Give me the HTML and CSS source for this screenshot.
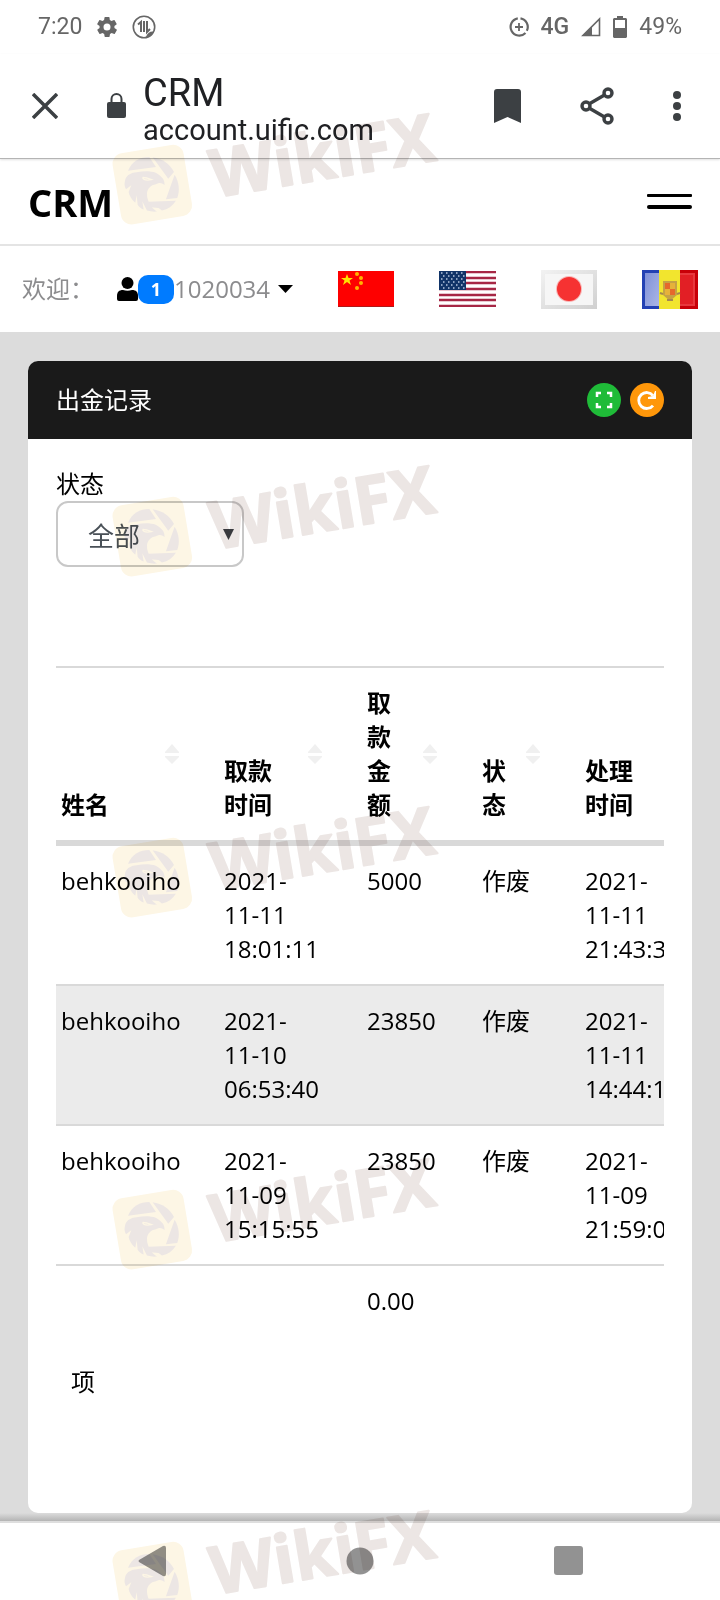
FILE: index.html
```html
<!DOCTYPE html>
<html lang="zh-CN">

<head>
    <meta charset="UTF-8">
    <meta name="viewport" content="width=device-width, initial-scale=1.0">
    <title>CRM</title>
    <link rel="stylesheet" href="styles.css">
</head>

<body>

    <!-- Shared shapes -->
    <svg class="defs" width="0" height="0" aria-hidden="true">
        <symbol id="sort" viewBox="0 0 14 20">
            <path fill="#f0f0f0" d="M0 9v-1L7 0l7 8v1zM0 12h14v1l-7 7-7-7z" />
        </symbol>
        <symbol id="wikifx" viewBox="330 320 1000 360">
            <rect x="349" y="445" width="216" height="216" rx="32" fill="#fdf6e5" transform="rotate(-9.5 457 553)" />
            <g fill="#ece6e4" transform="translate(324 417)">
                <path d="M60 94C72 66 96 53 124 53l20 30z" />
                <path d="M134 54c28 4 52 20 64 44l-17 20z" />
                <path d="M200 106c14 22 16 48 8 70l-34 4z" />
                <path d="M120 187l84-3c-10 16-24 26-42 30l-10-8-24-2z" />
                <path d="M52 120c6-14 18-20 34-21 14-3 30-4 44-2 10 0 20 6 28 14 8 6 12 14 12 26l-6-4c-8-4-14-2-20 2-16 2-26 14-27 28 0 22 12 42 30 54-10 1-20 0-30-3l-14-28 4 25c-8-4-14-9-18-15l-3-28-4 22c-10-8-18-20-20-32l8-20-16 12c-4-8-5-14-4-20z" />
                <path fill="none" stroke="#fdf6e5" stroke-width="4" d="M104 114c2 8 10 10 26 7l-14-5-12-2" />
            </g>
            <text class="wikifx-text" x="644" y="592" transform="rotate(-9.5 644 592)">WikiFX</text>
        </symbol>
    </svg>

    <!-- Phone status bar -->
    <div class="status-bar">
        <div class="status-left">
            <span>7:20</span>
            <svg width="20" height="20" viewBox="2 2 20 20">
                <path fill="#666" d="M19.4 13a7.500 7.500 0 0 0 0-2l2.100-1.600a.5.5 0 0 0 .1-.6l-2-3.500a.5.5 0 0 0-.6-.2l-2.500 1a7.300 7.300 0 0 0-1.700-1L14.500 2.400a.5.5 0 0 0-.5-.4h-4a.5.5 0 0 0-.5.4l-.4 2.700a7.700 7.700 0 0 0-1.700 1l-2.500-1a.5.5 0 0 0-.6.2l-2 3.500a.5.5 0 0 0 .1.6L4.600 11a7.500 7.500 0 0 0 0 2l-2.100 1.600a.5.5 0 0 0-.1.600l2 3.500c.1.200.4.300.6.200l2.500-1a7.300 7.300 0 0 0 1.700 1l.4 2.700c0 .2.200.4.500.4h4c.2 0 .5-.2.5-.4l.4-2.700a7.700 7.700 0 0 0 1.700-1l2.500 1c.2.100.5 0 .6-.2l2-3.500a.5.5 0 0 0-.1-.6zM12 15.500a3.500 3.500 0 1 1 0-7 3.500 3.500 0 0 1 0 7z" />
            </svg>
            <svg width="24" height="24" viewBox="0 0 24 24">
                <circle cx="12" cy="12" r="10.700" fill="none" stroke="#666" stroke-width="1.600" />
                <path fill="none" stroke="#666" stroke-width="2" d="M6 9.500L9 7v10M12 6v11M15 6v11l3-3" />
                <path fill="#666" d="M14 22c1-4 4-6 8-5.500-1 3-4 5.500-8 5.500z" />
            </svg>
        </div>
        <div class="status-right">
            <svg width="20" height="20" viewBox="0 0 20 20" fill="none" stroke="#666">
                <path stroke-width="2.200" d="M8.800 1.300A8.700 8.700 0 1 0 16.500 16M11.500 1.300a8.700 8.700 0 0 1 6.300 12.500" />
                <path stroke-width="1.800" d="M10 6v8M6 10h8" />
            </svg>
            <span class="network">4G</span>
            <svg width="20" height="20" viewBox="0 0 20 20">
                <path fill="none" stroke="#666" stroke-width="1.600" d="M2 18.500H18.500V2z" />
                <path fill="#666" d="M1 19L11 9v10z" />
            </svg>
            <svg width="14" height="24" viewBox="0 0 14 24">
                <path fill="#666" fill-rule="evenodd" d="M4 1h6v2h3l1 1v18l-1 1H1l-1-1V4l1-1h3zM2 5v8h10V5z" />
            </svg>
            <span>49%</span>
        </div>
    </div>

    <!-- Browser bar -->
    <div class="browser-bar">
        <button class="icon-button" aria-label="Close">
            <svg width="26" height="26" viewBox="0 0 26 26">
                <path stroke="#3c4043" stroke-width="3.500" d="M1 1l24 24M25 1L1 25" />
            </svg>
        </button>
        <svg class="lock" width="19" height="26" viewBox="0 0 19 26">
            <rect y="9" width="19" height="16" rx="2" fill="#3c4043" />
            <path fill="none" stroke="#3c4043" stroke-width="2" d="M4.500 10V6a5 5 0 0 1 10 0v4" />
        </svg>
        <div class="page-info">
            <span class="page-title">CRM</span>
            <span class="page-url">account.uific.com</span>
        </div>
        <div class="browser-actions">
            <button class="icon-button" aria-label="Bookmark">
                <svg width="27" height="34" viewBox="0 0 27 34">
                    <path fill="#3c4043" d="M3 0h21a3 3 0 0 1 3 3v31l-13.500-6L0 34V3a3 3 0 0 1 3-3z" />
                </svg>
            </button>
            <button class="icon-button" aria-label="Share">
                <svg width="34" height="38" viewBox="0 0 34 38" fill="none" stroke="#3c4043" stroke-width="3.400">
                    <circle cx="28" cy="6" r="4" />
                    <circle cx="6" cy="19" r="4" />
                    <circle cx="28" cy="32" r="4" />
                    <path d="M9 17l15.500-9M9 21l15.500 9" />
                </svg>
            </button>
            <button class="icon-button" aria-label="More">
                <svg width="8" height="32" viewBox="0 0 8 32" fill="#3c4043">
                    <circle cx="4" cy="5" r="4" />
                    <circle cx="4" cy="16" r="4" />
                    <circle cx="4" cy="27" r="4" />
                </svg>
            </button>
        </div>
    </div>

    <!-- Site header -->
    <header class="site-header">
        <a href="#" class="brand">CRM</a>
        <button class="icon-button" aria-label="Menu">
            <svg width="45" height="16" viewBox="0 0 45 16">
                <rect width="45" height="3" rx="1" />
                <rect y="11" width="45" height="4" rx="2" />
            </svg>
        </button>
    </header>

    <nav class="user-bar">
        <div class="welcome">
            <span>欢迎：</span>
            <a href="#" class="user-menu">
                <svg width="21" height="24" viewBox="0 0 21 24">
                    <circle cx="10.500" cy="6" r="6" />
                    <path d="M0 22v-3c0-4 2-6 6-6 3 1 6 1 9 0 4 0 6 2 6 6v3a2 2 0 0 1-2 2H2a2 2 0 0 1-2-2z" />
                </svg>
                <span class="badge">1</span>
                <span>1020034</span>
                <svg class="caret" width="15" height="8" viewBox="0 0 15 8">
                    <path d="M0 0h15L7.500 8z" />
                </svg>
            </a>
        </div>
        <a href="#" class="flag" aria-label="中文">
            <svg width="56" height="36" viewBox="0 0 56 36">
                <path fill="#fe0000" d="M0 0h56v36H0z" />
                <path fill="#b01818" d="M0 35h56v1H0z" />
                <path fill="#ffe400" d="M9 3l1.500 4H15l-3.500 2.500 1.500 4.500-4-3-4 3 1.500-4.500L3 7h4.500z" />
                <g fill="#ffb400">
                    <circle cx="19" cy="3" r="2" />
                    <circle cx="23" cy="7" r="2" />
                    <circle cx="23" cy="12" r="2" />
                    <circle cx="19" cy="17" r="2" />
                </g>
            </svg>
        </a>
        <a href="#" class="flag" aria-label="English">
            <svg width="57" height="36" viewBox="0 0 57 36">
                <path fill="#fff" d="M0 0h57v36H0z" />
                <path stroke="#a62745" stroke-width="2.700" d="M0 1h57M0 7h57M0 12h57M0 18h57M0 24h57M0 29h57M0 35h57" />
                <path fill="#113468" d="M0 0h27v19H0z" />
                <path stroke="#b8c8e0" stroke-width="1.500" stroke-dasharray="1.500 3.500" d="M2 2h25M4 5h23M2 8h25M4 11h23M2 14h25M4 17h23" />
            </svg>
        </a>
        <a href="#" class="flag" aria-label="日本語">
            <svg width="56" height="39" viewBox="0 0 56 39">
                <defs>
                    <linearGradient id="paper" x1="0" y1="0" x2="1" y2="1">
                        <stop offset="0" stop-color="#f2f2f2" />
                        <stop offset="1" stop-color="#d0d0d0" />
                    </linearGradient>
                </defs>
                <path fill="url(#paper)" d="M0 0h56v39H0z" />
                <path fill="#f6f6f6" d="M4 4h48v31H4z" />
                <circle cx="28" cy="19" r="13" fill="#f9b5b5" />
                <circle cx="28" cy="19" r="12" fill="#f63232" />
            </svg>
        </a>
        <a href="#" class="flag" aria-label="Andorra">
            <svg width="56" height="39" viewBox="0 0 56 39">
                <defs>
                    <linearGradient id="blue" x1="0" y1="0" x2="1" y2="1">
                        <stop offset="0" stop-color="#7f90d8" />
                        <stop offset="1" stop-color="#aab6e6" />
                    </linearGradient>
                </defs>
                <path fill="#2341b4" d="M0 0h18v39H0z" />
                <path fill="url(#blue)" d="M3 3h14v33H3z" />
                <path fill="#c80008" d="M38 0h18v39H38z" />
                <path fill="#e8383d" d="M38 3h15v33H38z" />
                <path fill="#e21f25" d="M38 5h13v29H38z" />
                <path fill="#f2e52e" d="M17 0h21v39H17z" />
                <path fill="#c5a245" d="M21 11h14v14l-7 6-7-6z" />
                <path fill="#e5692c" d="M23 13h5v6h-5zM28 19h5v6h-5z" />
                <path fill="#e6b23a" d="M28 13h5v6h-5zM23 19h5v6h-5z" />
                <path fill="none" stroke="#a58850" stroke-width="2" d="M18 23l3 1M35 24l3-1M25 30h6" />
            </svg>
        </a>
    </nav>

    <main class="content">
        <section class="card">
            <div class="card-header">
                <h1>出金记录</h1>
                <div class="card-tools">
                    <button class="tool tool-expand" aria-label="Fullscreen">
                        <svg width="18" height="18" viewBox="0 0 18 18" fill="none" stroke="#fff" stroke-width="2.500">
                            <path d="M2 6V2h4M12 2h4v4M16 12v4h-4M6 16H2v-4" />
                        </svg>
                    </button>
                    <button class="tool tool-reload" aria-label="Reload">
                        <svg width="20" height="20" viewBox="0 0 20 20" fill="none" stroke="#fff" stroke-width="2.800">
                            <path d="M16 15.500A8 8 0 1 1 16 5.500" />
                            <path fill="#fff" stroke="none" d="M19 1v8h-8V7l5-1 2-5z" />
                        </svg>
                    </button>
                </div>
            </div>

            <div class="card-body">
                <label for="status">状态</label>
                <div class="select-box">
                    <select id="status">
                        <option>全部</option>
                    </select>
                    <svg class="select-arrow" width="11" height="11" viewBox="0 0 11 11">
                        <path fill="#3c3f44" d="M0 0h11L5.500 11z" />
                    </svg>
                </div>

                <div class="table-wrap">
                    <table>
                        <colgroup>
                            <col class="col-name">
                            <col class="col-time">
                            <col class="col-amount">
                            <col class="col-status">
                            <col class="col-time">
                        </colgroup>
                        <thead>
                            <tr>
                                <th>姓名<svg class="sort"><use href="#sort" /></svg></th>
                                <th>取款时间<svg class="sort"><use href="#sort" /></svg></th>
                                <th>取款金额<svg class="sort"><use href="#sort" /></svg></th>
                                <th>状态<svg class="sort"><use href="#sort" /></svg></th>
                                <th>处理时间<svg class="sort"><use href="#sort" /></svg></th>
                            </tr>
                        </thead>
                        <tbody>
                            <tr>
                                <td>behkooiho</td>
                                <td>2021-11-11 18:01:11</td>
                                <td>5000</td>
                                <td>作废</td>
                                <td>2021-11-11 21:43:33</td>
                            </tr>
                            <tr>
                                <td>behkooiho</td>
                                <td>2021-11-10 06:53:40</td>
                                <td>23850</td>
                                <td>作废</td>
                                <td>2021-11-11 14:44:11</td>
                            </tr>
                            <tr>
                                <td>behkooiho</td>
                                <td>2021-11-09 15:15:55</td>
                                <td>23850</td>
                                <td>作废</td>
                                <td>2021-11-09 21:59:00</td>
                            </tr>
                        </tbody>
                        <tfoot>
                            <tr>
                                <td></td>
                                <td></td>
                                <td>0.00</td>
                                <td></td>
                                <td></td>
                            </tr>
                        </tfoot>
                    </table>
                </div>

                <p class="table-info">项</p>
            </div>
        </section>
    </main>

    <!-- Phone navigation -->
    <div class="phone-nav">
        <button class="icon-button" aria-label="Back">
            <svg width="28" height="32" viewBox="0 0 28 32">
                <path fill="#929292" d="M1 15L25 1q3-1 3 2v26q0 3-3 2L1 17q-1-1 0-2z" />
            </svg>
        </button>
        <button class="icon-button" aria-label="Home">
            <svg width="28" height="28" viewBox="0 0 28 28">
                <circle cx="14" cy="14" r="13.500" fill="#929292" />
            </svg>
        </button>
        <button class="icon-button" aria-label="Recent apps">
            <svg width="29" height="29" viewBox="0 0 29 29">
                <rect width="29" height="29" rx="3" fill="#929292" />
            </svg>
        </button>
    </div>

    <!-- Watermark, repeated down the page -->
    <div class="watermarks watermarks-top">
        <svg class="watermark"><use href="#wikifx" /></svg>
        <svg class="watermark"><use href="#wikifx" /></svg>
    </div>
    <div class="watermarks watermarks-bottom">
        <svg class="watermark"><use href="#wikifx" /></svg>
        <svg class="watermark"><use href="#wikifx" /></svg>
        <svg class="watermark"><use href="#wikifx" /></svg>
    </div>

</body>

</html>
```

FILE: styles.css
```css
* {
    box-sizing: border-box;
}

body {
    display: flex;
    flex-direction: column;
    position: relative;
    min-height: 100vh;
    margin: 0;
    overflow-x: hidden;
    background-color: #fff;
    color: #000;
    font-family: "Open Sans", "Noto Sans CJK SC", sans-serif;
    font-size: 24px;
    line-height: 34px;
}

svg {
    display: block;
    flex: none;
}

a {
    color: inherit;
    text-decoration: none;
}

.defs {
    position: absolute;
}

.icon-button {
    padding: 0;
    border: none;
    background: none;
    cursor: pointer;
}

/* Phone status bar */
.status-bar {
    display: flex;
    align-items: center;
    justify-content: space-between;
    height: 54px;
    padding: 0 38px;
    color: #666;
    font-family: Roboto, sans-serif;
    font-size: 23px;
}

.status-left,
.status-right {
    display: flex;
    align-items: center;
}

.status-left {
    gap: 15px;
}

.status-right {
    gap: 12px;
}

.network {
    font-weight: 500;
}

/* Browser bar */
.browser-bar {
    display: flex;
    align-items: center;
    height: 105px;
    padding: 0 39px 0 32px;
    border-bottom: 1px solid #b4b4b4;
    box-shadow: 0 1px 2px rgba(0, 0, 0, 0.12);
    font-family: Roboto, sans-serif;
}

.lock {
    margin: 0 17px 0 49px;
}

.page-info {
    display: flex;
    flex-direction: column;
    flex: 1;
    padding-top: 7px;
    color: #202124;
}

.page-title {
    font-size: 38px;
    line-height: 40px;
}

.page-url {
    font-size: 29px;
    line-height: 34px;
}

.browser-actions {
    display: flex;
    align-items: center;
    gap: 59px;
}

/* Site header */
.site-header {
    display: flex;
    align-items: center;
    justify-content: space-between;
    height: 87px;
    padding: 0 28px;
    border-bottom: 2px solid #e4e4e4;
}

.brand {
    font-size: 38px;
    font-weight: 700;
}

.user-bar {
    display: flex;
    align-items: center;
    justify-content: space-between;
    height: 86px;
    padding: 0 22px;
    color: #8c8c8e;
}

.welcome,
.user-menu {
    display: flex;
    align-items: center;
}

.welcome {
    gap: 23px;
}

.badge {
    width: 36px;
    border-radius: 10px;
    background-color: #007bff;
    color: #fff;
    font-size: 18px;
    font-weight: 700;
    line-height: 29px;
    text-align: center;
}

.caret {
    margin-left: 8px;
}

/* Card */
.content {
    display: flex;
    flex: 1;
    flex-direction: column;
    padding: 29px 28px 8px;
    background: linear-gradient(to top, #b4b4b4, #dcdcdc 8px);
}

.card {
    flex: 1;
    border-radius: 10px;
    background-color: #fff;
}

.card-header {
    display: flex;
    align-items: center;
    justify-content: space-between;
    height: 78px;
    padding: 0 28px;
    border-radius: 10px 10px 0 0;
    background-color: #1a1a1a;
    color: #fff;
}

h1 {
    margin: 0;
    font-size: 24px;
    font-weight: 400;
}

.card-tools {
    display: flex;
    gap: 9px;
}

.tool {
    display: flex;
    align-items: center;
    justify-content: center;
    width: 34px;
    height: 34px;
    padding: 0;
    border: none;
    border-radius: 50%;
    cursor: pointer;
}

.tool-expand {
    background-color: #1fbb38;
}

.tool-reload {
    background-color: #ff970a;
}

.card-body {
    padding: 28px 28px 0;
}

label {
    display: block;
}

.select-box {
    position: relative;
    width: 188px;
}

select {
    display: block;
    width: 100%;
    height: 66px;
    padding: 4px 30px 0;
    border: 2px solid #c8c8c8;
    border-radius: 12px;
    background-color: #fff;
    color: #495057;
    font-family: inherit;
    font-size: 26px;
    appearance: none;
}

.select-arrow {
    position: absolute;
    top: 28px;
    right: 10px;
}

/* Records table */
.table-wrap {
    margin-top: 99px;
    overflow: hidden;
}

table {
    width: 667px;
    border-collapse: separate;
    border-spacing: 0;
    border-top: 2px solid #d9d9d9;
    table-layout: fixed;
}

.col-name {
    width: 163px;
}

.col-time {
    width: 143px;
}

.col-amount {
    width: 115px;
}

.col-status {
    width: 103px;
}

th,
td {
    padding: 18px 40px 18px 5px;
    text-align: left;
    vertical-align: top;
}

td {
    padding-right: 41px;
}

th {
    position: relative;
    padding-right: 70px;
    border-bottom: 6px solid #d9d9d9;
    vertical-align: bottom;
}

.sort {
    position: absolute;
    top: 50%;
    right: 40px;
    width: 14px;
    height: 20px;
    margin-top: -10px;
}

tbody td {
    border-bottom: 2px solid #d9d9d9;
}

tbody tr:nth-child(even) {
    background-color: #ebebeb;
}

.table-info {
    margin: 29px 15px;
}

/* Phone navigation */
.phone-nav {
    display: grid;
    grid-template-columns: repeat(3, 1fr);
    align-items: center;
    justify-items: center;
    height: 79px;
    padding: 0 48px 2px;
    border-top: 2px solid #dedede;
}

/* Watermark */
.watermarks {
    display: flex;
    flex-direction: column;
    gap: 232px;
    position: absolute;
    left: 110px;
    overflow: hidden;
    mix-blend-mode: multiply;
    pointer-events: none;
}

.watermarks-top {
    top: 107px;
}

.watermarks-bottom {
    top: 800px;
    bottom: 0;
}

.watermark {
    width: 333px;
    height: 120px;
}

.wikifx-text {
    fill: #ece6e4;
    stroke: #ece6e4;
    stroke-width: 6px;
    stroke-linejoin: round;
    font-family: "Open Sans", sans-serif;
    font-size: 199px;
    font-weight: 700;
}
```
